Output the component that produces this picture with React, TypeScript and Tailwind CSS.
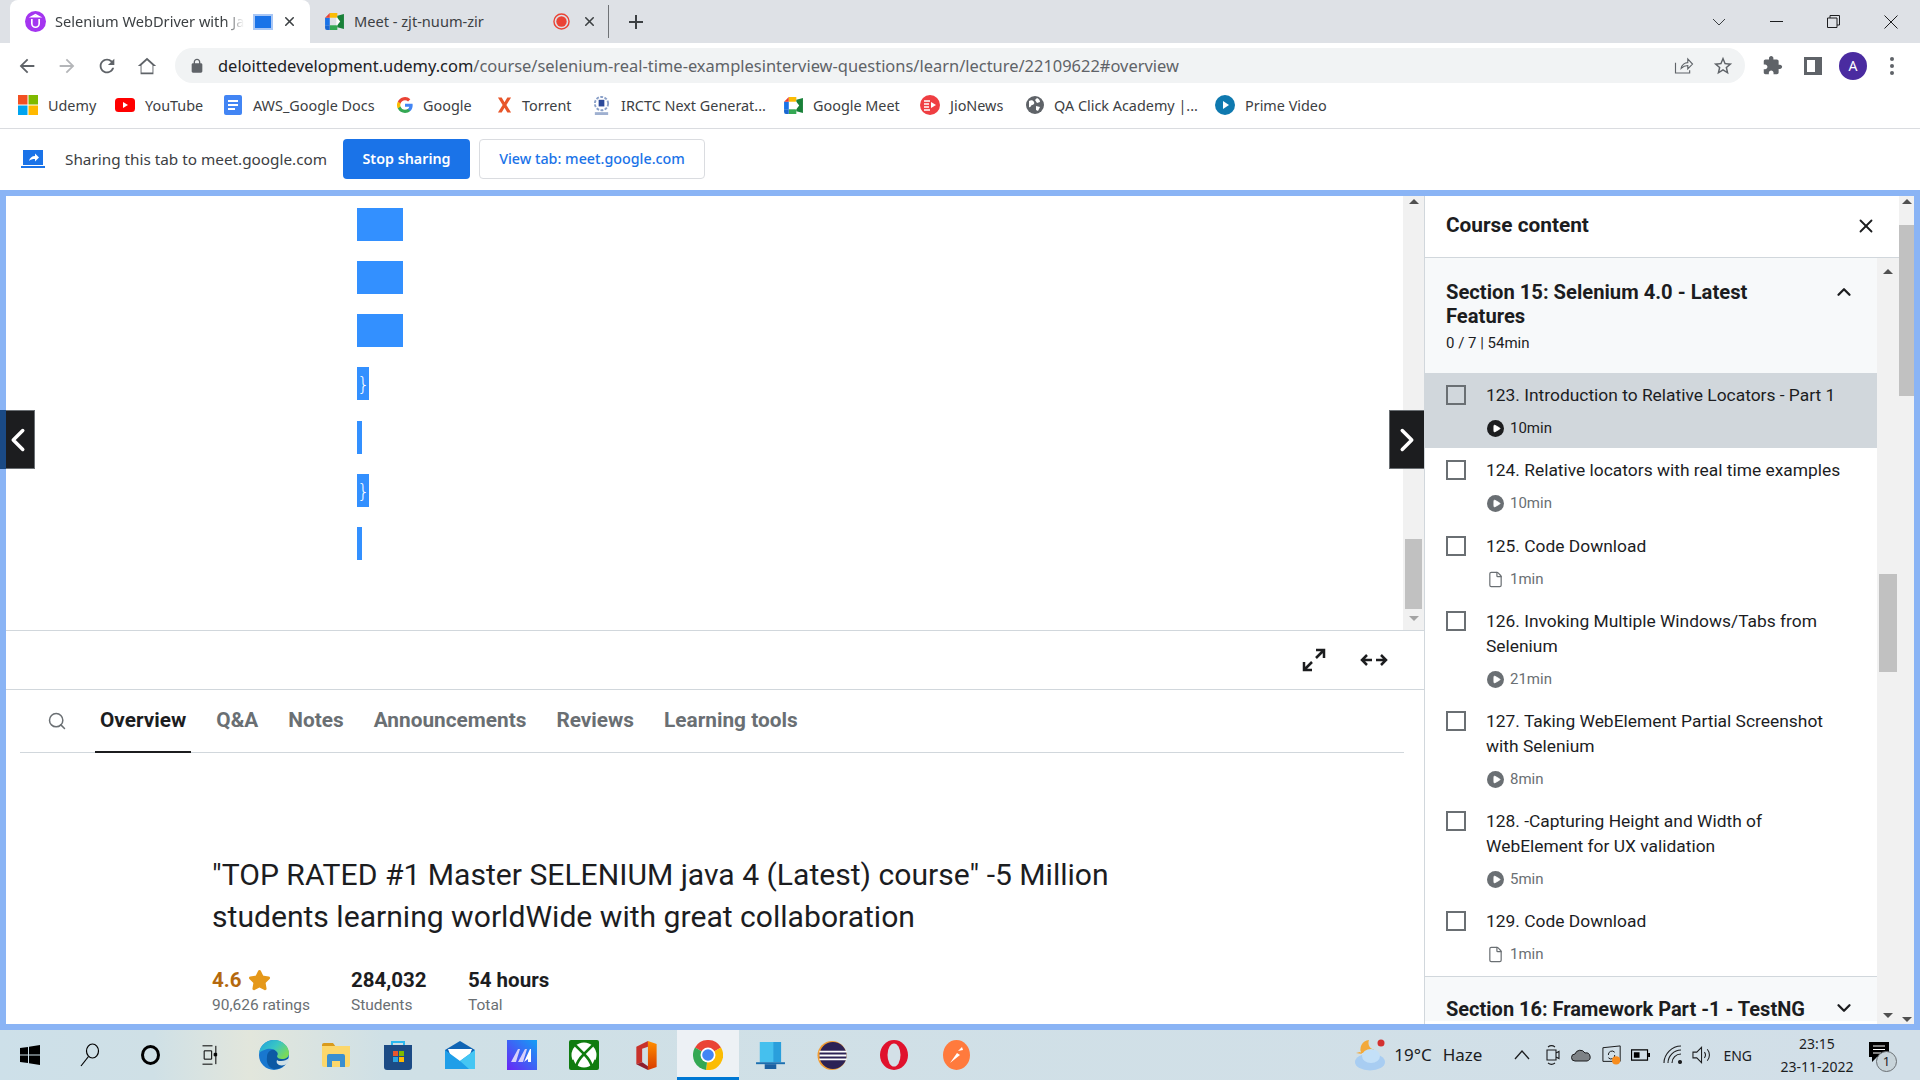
import type { ReactNode } from 'react'
import { Play, File, ChevronUp, ChevronDown, X, ChevronLeft, ChevronRight, Search, Star } from 'lucide-react'

const chromeFont = "font-[family-name:'Noto_Sans',sans-serif]"
const udemyFont = "font-[family-name:Roboto,sans-serif]"

function Mat({ d, className = '' }: { d: string; className?: string }) {
  return (
    <svg viewBox="0 0 24 24" className={className} fill="currentColor">
      <path d={d} />
    </svg>
  )
}

function MeetIcon({ className = '' }: { className?: string }) {
  return (
    <svg viewBox="0 0 20 18" className={className}>
      <path d="M0 5h5v8H0z" fill="#1a73e8" />
      <path d="M5 0h8v5H5z" fill="#fbbc04" />
      <path d="M0 5l5-5v5z" fill="#ea4335" />
      <path d="M5 13h8v5H5z" fill="#34a853" />
      <path d="M0 13h5v5H2a2 2 0 0 1-2-2z" fill="#1967d2" />
      <path d="M13 3v12l7 2V1z" fill="#188038" />
      <path d="M13 5h-1v8h1l3-4z" fill="#fff" />
    </svg>
  )
}

function Tab() {
  return (
    <div className="relative flex h-[43px] w-[300px] items-center rounded-t-[8px] bg-white pl-[15px]">
      <svg viewBox="0 0 20 20" className="h-[21px] w-[21px] shrink-0">
        <circle cx="10" cy="10" r="10" fill="#a435f0" />
        <path d="M6.5 7.5V12a3.5 3.5 0 0 0 7 0V7.5M10 3.5l3.5 2h-7z" fill="none" stroke="#fff" strokeWidth="1.6" />
      </svg>
      <div className="ml-[9px] w-[189px] overflow-hidden whitespace-nowrap text-[14.6px] text-[#3c4043] [mask-image:linear-gradient(90deg,#000_90%,transparent)]">
        Selenium WebDriver with Java
      </div>
      <div className="ml-[9px] h-[16px] w-[20px] shrink-0 border-2 border-[#a9c7f5] bg-[#1a73e8]" />
      <X className="ml-[9px] h-[15px] w-[15px] text-[#3c4043]" strokeWidth={2.5} />
    </div>
  )
}

function TabStrip() {
  return (
    <div className="flex h-[43px] shrink-0 items-center bg-[#dee1e6] pl-[10px]">
      <Tab />
      <div className="flex h-full items-center pl-[15px]">
        <MeetIcon className="h-[17px] w-[19px]" />
        <span className="ml-[10px] w-[199px] text-[14.6px] text-[#3c4043]">Meet - zjt-nuum-zir</span>
        <svg viewBox="0 0 18 18" className="h-[17px] w-[17px]">
          <circle cx="9" cy="9" r="8" fill="none" stroke="#ea4335" strokeWidth="1.5" />
          <circle cx="9" cy="9" r="5.5" fill="#ea4335" />
        </svg>
        <X className="ml-[12px] h-[15px] w-[15px] text-[#3c4043]" strokeWidth={2.5} />
        <div className="ml-[11px] h-[33px] w-px bg-[#6f7276]" />
        <svg viewBox="0 0 16 16" className="ml-[19px] h-[16px] w-[16px] text-[#3c4043]">
          <path d="M8 1v14M1 8h14" stroke="currentColor" strokeWidth="2" />
        </svg>
      </div>
      <div className="ml-auto flex items-center pr-[22px] text-[#3c4043]">
        <svg viewBox="0 0 14 8" className="mr-[44px] h-[8px] w-[14px]" fill="none" stroke="currentColor">
          <path d="M1 1l6 6 6-6" />
        </svg>
        <div className="mr-[44px] h-px w-[13px] bg-[#1c1d1f]" />
        <svg viewBox="0 0 13 13" className="mr-[44px] h-[13px] w-[13px]" fill="none" stroke="#1c1d1f">
          <path d="M.5 3h9.5v9.5H.5zM3 3V.5h9.5V10H10" />
        </svg>
        <svg viewBox="0 0 14 14" className="h-[14px] w-[14px]" fill="none" stroke="#1c1d1f">
          <path d="M.5.5l13 13M13.5.5l-13 13" />
        </svg>
      </div>
    </div>
  )
}

function Toolbar() {
  return (
    <div className="flex h-[40px] shrink-0 items-end bg-white text-[#5f6368]">
      <div className="flex h-[35px] w-[175px] items-center pl-[16px]">
        <Mat d="M20 11H7.83l5.59-5.59L12 4l-8 8 8 8 1.41-1.41L7.83 13H20v-2z" className="h-[22px] w-[22px]" />
        <Mat d="M12 4l-1.41 1.41L16.17 11H4v2h12.17l-5.58 5.59L12 20l8-8z" className="ml-[18px] h-[22px] w-[22px] text-[#b4b6b9]" />
        <Mat d="M17.65 6.35A7.958 7.958 0 0 0 12 4c-4.42 0-7.99 3.58-7.99 8s3.57 8 7.99 8c3.73 0 6.84-2.55 7.73-6h-2.08A5.99 5.99 0 0 1 12 18c-3.31 0-6-2.69-6-6s2.69-6 6-6c1.66 0 3.14.69 4.22 1.78L13 11h7V4l-2.35 2.35z" className="ml-[18px] h-[22px] w-[22px]" />
        <Mat d="M12 5.7l6 5.4V19H6v-7.9l6-5.4M12 3L2 12h3v9h14v-9h3z" className="ml-[18px] h-[22px] w-[22px]" />
      </div>
      <div className="flex h-[35px] w-[1570px] items-center rounded-full bg-[#f1f3f4] pl-[14px]">
        <Mat d="M18 8h-1V6c0-2.76-2.24-5-5-5S7 3.24 7 6v2H6c-1.1 0-2 .9-2 2v10c0 1.1.9 2 2 2h12c1.1 0 2-.9 2-2V10c0-1.1-.9-2-2-2zM9 8V6c0-1.66 1.34-3 3-3s3 1.34 3 3v2H9z" className="h-[16px] w-[16px]" />
        <div className="ml-[13px] whitespace-nowrap text-[16.45px] leading-[24px] text-[#5f6368]">
          <span className="text-[#202124]">deloittedevelopment.udemy.com</span>/course/selenium-real-time-examplesinterview-questions/learn/lecture/22109622#overview
        </div>
        <div className="ml-auto flex items-center pr-[11px]">
          <svg viewBox="0 0 20 18" className="h-[17px] w-[20px]" fill="none" stroke="#5f6368" strokeWidth="1.2">
            <path d="M1 6v11h15v-3M7 12c.5-4 4-6 7-6V2l5 5.5-5 5V9c-3 0-5 1-7 3z" />
          </svg>
          <Mat d="M22 9.24l-7.19-.62L12 2 9.19 8.63 2 9.24l5.46 4.73L5.82 21 12 17.27 18.18 21l-1.63-7.03L22 9.24zM12 15.4l-3.76 2.27 1-4.28-3.32-2.88 4.38-.38L12 6.1l1.71 4.04 4.38.38-3.32 2.88 1 4.28L12 15.4z" className="ml-[18px] h-[22px] w-[22px]" />
        </div>
      </div>
      <div className="flex h-[35px] flex-1 items-center pl-[17px]">
        <Mat d="M20.5 11H19V7c0-1.1-.9-2-2-2h-4V3.5C13 2.12 11.88 1 10.5 1S8 2.12 8 3.5V5H4c-1.1 0-1.99.9-1.99 2v3.8H3.5c1.49 0 2.7 1.21 2.7 2.7s-1.21 2.7-2.7 2.7H2V20c0 1.1.9 2 2 2h3.8v-1.5c0-1.49 1.21-2.7 2.7-2.7 1.49 0 2.7 1.21 2.7 2.7V22H17c1.1 0 2-.9 2-2v-4h1.5c1.38 0 2.5-1.12 2.5-2.5S21.88 11 20.5 11z" className="h-[21px] w-[21px]" />
        <div className="ml-[21px] flex h-[18px] w-[18px] justify-start border-[3px] border-[#5f6368] bg-[#5f6368]">
          <div className="h-full w-[8px] bg-white" />
        </div>
        <div className="ml-[17px] flex h-[28px] w-[28px] items-center justify-center rounded-full bg-[#4a2ba0] text-[14px] text-white">A</div>
        <div className="ml-[23px] flex flex-col gap-[3px]">
          <div className="h-[4px] w-[4px] rounded-full bg-[#5f6368]" />
          <div className="h-[4px] w-[4px] rounded-full bg-[#5f6368]" />
          <div className="h-[4px] w-[4px] rounded-full bg-[#5f6368]" />
        </div>
      </div>
    </div>
  )
}

const bookmarks: { label: string; width: string; icon: ReactNode }[] = [
  {
    label: 'Udemy',
    width: 'w-[97px]',
    icon: (
      <svg viewBox="0 0 20 20" className="h-[20px] w-[20px]">
        <path d="M0 0h9.5v9.5H0z" fill="#f25022" />
        <path d="M10.5 0H20v9.5h-9.5z" fill="#7fba00" />
        <path d="M0 10.5h9.5V20H0z" fill="#00a4ef" />
        <path d="M10.5 10.5H20V20h-9.5z" fill="#ffb900" />
      </svg>
    ),
  },
  {
    label: 'YouTube',
    width: 'w-[108px]',
    icon: (
      <svg viewBox="0 0 20 14" className="h-[14px] w-[20px]">
        <rect width="20" height="14" rx="3.5" fill="#f00" />
        <path d="M8 4l5 3-5 3z" fill="#fff" />
      </svg>
    ),
  },
  {
    label: 'AWS_Google Docs',
    width: 'w-[174px]',
    icon: (
      <svg viewBox="0 0 20 20" className="h-[20px] w-[20px]">
        <rect x="1" width="18" height="20" rx="2" fill="#4285f4" />
        <path d="M5 6h10M5 10h10M5 14h7" stroke="#fff" strokeWidth="1.8" />
      </svg>
    ),
  },
  {
    label: 'Google',
    width: 'w-[100px]',
    icon: (
      <svg viewBox="0 0 24 24" className="h-[16px] w-[16px]">
        <path d="M23.5 12.3c0-.8-.1-1.6-.2-2.3H12v4.5h6.5a5.5 5.5 0 0 1-2.4 3.6v3h3.8c2.3-2.1 3.6-5.2 3.6-8.8z" fill="#4285f4" />
        <path d="M12 24c3.2 0 6-1.1 7.9-2.9l-3.8-3c-1.1.7-2.4 1.2-4.1 1.2-3.1 0-5.8-2.1-6.7-5H1.3v3.1A12 12 0 0 0 12 24z" fill="#34a853" />
        <path d="M5.3 14.3a7.2 7.2 0 0 1 0-4.6V6.6h-4a12 12 0 0 0 0 10.8z" fill="#fbbc05" />
        <path d="M12 4.8c1.8 0 3.3.6 4.6 1.8l3.4-3.4A12 12 0 0 0 1.3 6.6l4 3.1c.9-2.8 3.6-4.9 6.7-4.9z" fill="#ea4335" />
      </svg>
    ),
  },
  {
    label: 'Torrent',
    width: 'w-[95px]',
    icon: (
      <svg viewBox="0 0 16 18" className="h-[18px] w-[15px]">
        <path d="M1 1h4l3 5 3-5h4l-5 8 5 8h-4l-3-5-3 5H1l5-8z" fill="#e8562a" />
      </svg>
    ),
  },
  {
    label: 'IRCTC Next Generat...',
    width: 'w-[192px]',
    icon: (
      <svg viewBox="0 0 20 22" className="h-[21px] w-[19px]">
        <circle cx="10" cy="9" r="7" fill="none" stroke="#8aa0c8" strokeWidth="2" strokeDasharray="3 1.5" />
        <path d="M7 5h6v7H7z" fill="#2c4a9a" />
        <path d="M3 18h14v3H3z" fill="#9fb0d0" />
      </svg>
    ),
  },
  { label: 'Google Meet', width: 'w-[136px]', icon: <MeetIcon className="h-[17px] w-[19px]" /> },
  {
    label: 'JioNews',
    width: 'w-[106px]',
    icon: (
      <svg viewBox="0 0 20 20" className="h-[20px] w-[20px]">
        <circle cx="10" cy="10" r="10" fill="#ef3e42" />
        <path d="M4 6h6M4 9h5M4 12h5M4 15h6" stroke="#fff" strokeWidth="1.5" />
        <path d="M11 7l5 3-5 3z" fill="#fff" />
      </svg>
    ),
  },
  {
    label: 'QA Click Academy |...',
    width: 'w-[189px]',
    icon: (
      <svg viewBox="0 0 18 18" className="h-[18px] w-[18px]">
        <circle cx="9" cy="9" r="9" fill="#5f6368" />
        <path d="M3 5c2-1 4-1 5 1s-1 3-2 3-1 3-3 2zM11 2c2 1 3 2 3 4l-3 1-2-3zM10 10l4 1-2 4-2-1z" fill="#fff" />
      </svg>
    ),
  },
  {
    label: 'Prime Video',
    width: 'w-auto',
    icon: (
      <svg viewBox="0 0 20 20" className="h-[20px] w-[20px]">
        <circle cx="10" cy="10" r="10" fill="#0f79af" />
        <path d="M8 6l6 4-6 4z" fill="#fff" />
      </svg>
    ),
  },
]

function BookmarkBar() {
  return (
    <div className="flex h-[46px] shrink-0 items-center border-b border-[#dadce0] bg-white pl-[18px] text-[14.4px] text-[#3c4043]">
      {bookmarks.map((b) => (
        <div key={b.label} className={`flex items-center whitespace-nowrap ${b.width}`}>
          <span className="mr-[10px] flex items-center">{b.icon}</span>
          {b.label}
        </div>
      ))}
    </div>
  )
}

function ShareBar() {
  return (
    <div className="flex h-[61px] shrink-0 items-center bg-white pb-[1px] pl-[21px]">
      <svg viewBox="0 0 24 18" className="h-[18px] w-[24px]">
        <path d="M2 0h20v15H2z" fill="#1a73e8" />
        <path d="M0 16h24v2H0z" fill="#1a73e8" />
        <path d="M8 11c.5-3 3-5 6-5V3.5L18 7.5l-4 4V9c-2.5 0-4.5.5-6 2z" fill="#fff" />
      </svg>
      <span className="ml-[20px] w-[278px] text-[15.3px] text-[#3c4043]">Sharing this tab to meet.google.com</span>
      <div className="flex h-[40px] w-[127px] items-center justify-center rounded-[4px] bg-[#1a73e8] text-[14.3px] font-semibold text-white">Stop sharing</div>
      <div className="ml-[9px] flex h-[40px] w-[226px] items-center justify-center rounded-[4px] border border-[#dadce0] text-[14.3px] font-medium text-[#1a73e8]">View tab: meet.google.com</div>
    </div>
  )
}

function ScrollUp({ className = '' }: { className?: string }) {
  return <div className={`h-0 w-0 border-x-[5px] border-b-[5px] border-x-transparent border-b-[#505050] ${className}`} />
}

function ScrollDown({ className = '' }: { className?: string }) {
  return <div className={`h-0 w-0 border-x-[5px] border-t-[5px] border-x-transparent border-t-[#a3a3a3] ${className}`} />
}

const selections = [
  { cls: 'w-[46px]', text: '' },
  { cls: 'w-[46px]', text: '' },
  { cls: 'w-[46px]', text: '' },
  { cls: 'w-[12px]', text: '}' },
  { cls: 'w-[5px] mt-px', text: '' },
  { cls: 'w-[12px]', text: '}' },
  { cls: 'w-[5px]', text: '' },
]

function Viewer() {
  return (
    <div className="relative flex h-[435px] shrink-0 border-b border-[#d1d7dc]">
      <div className="flex flex-1 flex-col items-start gap-[20px] pl-[351px] pt-[12px]">
        {selections.map((s, i) => (
          <div key={i} className={`flex h-[33px] items-center overflow-hidden bg-[#3390ff] font-[family-name:'DejaVu_Sans',sans-serif] text-[20px] leading-none font-light text-white ${s.cls}`}>
            {s.text}
          </div>
        ))}
      </div>
      <div className="flex w-[21px] flex-col items-center bg-[#f1f1f1] pt-[3px]">
        <ScrollUp />
        <div className="mt-[335px] h-[70px] w-[17px] bg-[#c1c1c1]" />
        <ScrollDown className="mt-[7px]" />
      </div>
      <div className="absolute left-[-6px] top-[214px] flex h-[59px] w-[35px] items-center justify-center border border-[#6a6f73] bg-[#1c1d1f] text-white">
        <ChevronLeft className="h-[38px] w-[38px] shrink-0" strokeWidth={2.2} />
      </div>
      <div className="absolute right-0 top-[214px] flex h-[59px] w-[35px] items-center justify-center border border-r-0 border-[#6a6f73] bg-[#1c1d1f] text-white">
        <ChevronRight className="h-[38px] w-[38px] shrink-0" strokeWidth={2.2} />
      </div>
    </div>
  )
}

function Controls() {
  return (
    <div className="flex h-[59px] shrink-0 items-center justify-end border-b border-[#d1d7dc] pr-[36px] text-[#1c1d1f]">
      <svg viewBox="0 0 24 24" className="h-[24px] w-[24px]" fill="none" stroke="currentColor" strokeWidth="2.5">
        <path d="M14 2h8v8M22 2l-8 8M2 14v8h8M2 22l8-8" />
      </svg>
      <svg viewBox="0 0 28 14" className="ml-[34px] h-[14px] w-[28px]" fill="none" stroke="currentColor" strokeWidth="2.5">
        <path d="M7 2L2 7l5 5M2 7h10M21 2l5 5-5 5M26 7H16" />
      </svg>
    </div>
  )
}

const tabs = ['Q&A', 'Notes', 'Announcements', 'Reviews', 'Learning tools']

function TabsRow() {
  return (
    <div className="relative ml-[14px] mr-[20px] flex h-[63px] shrink-0 items-stretch gap-[20px] border-b border-[#d1d7dc] pl-[75px] text-[20.8px] font-bold">
      <Search className="absolute left-[27px] top-[21px] h-[20px] w-[20px] text-[#6a6f73]" strokeWidth={1.8} />
      <div className="relative flex items-center px-[5px] text-[#1c1d1f]">
        Overview
        <div className="absolute inset-x-0 bottom-[-1px] h-[2px] bg-[#1c1d1f]" />
      </div>
      {tabs.map((t) => (
        <div key={t} className="flex items-center px-[5px] text-[#6a6f73]">{t}</div>
      ))}
    </div>
  )
}

function Stat({ value, label }: { value: string; label: string }) {
  return (
    <div className="flex flex-col">
      <span className="text-[20.5px] font-bold leading-[24px] text-[#1c1d1f]">{value}</span>
      <span className="mt-[2px] text-[15.5px] leading-[22px] text-[#6a6f73]">{label}</span>
    </div>
  )
}

function MainColumn() {
  return (
    <div className={`flex w-[1418px] shrink-0 flex-col ${udemyFont}`}>
      <Viewer />
      <Controls />
      <TabsRow />
      <div className="pl-[206px] pt-[101px]">
        <div className="w-[1000px] text-[30.1px] leading-[42px] text-[#1c1d1f]">
          "TOP RATED #1 Master SELENIUM java 4 (Latest) course" -5 Million
          <br />
          students learning worldWide with great collaboration
        </div>
        <div className="mt-[30px] flex">
          <div className="flex w-[139px] flex-col">
            <div className="flex items-center">
              <span className="text-[20.5px] font-bold leading-[24px] text-[#b4690e]">4.6</span>
              <Star className="ml-[7px] h-[23px] w-[23px] fill-[#e59819] text-[#e59819]" />
            </div>
            <span className="mt-[2px] text-[15.5px] leading-[22px] text-[#6a6f73]">90,626 ratings</span>
          </div>
          <div className="w-[117px]">
            <Stat value="284,032" label="Students" />
          </div>
          <Stat value="54 hours" label="Total" />
        </div>
      </div>
    </div>
  )
}

type Lecture = { title: ReactNode; meta: string; kind: 'video' | 'file'; active?: boolean; pad?: string }

const lectures: Lecture[] = [
  { title: '123. Introduction to Relative Locators - Part 1', meta: '10min', kind: 'video', active: true },
  { title: '124. Relative locators with real time examples', meta: '10min', kind: 'video', pad: 'pb-[11px]' },
  { title: '125. Code Download', meta: '1min', kind: 'file' },
  { title: <>126. Invoking Multiple Windows/Tabs from<br />Selenium</>, meta: '21min', kind: 'video' },
  { title: <>127. Taking WebElement Partial Screenshot<br />with Selenium</>, meta: '8min', kind: 'video' },
  { title: <>128. -Capturing Height and Width of<br />WebElement for UX validation</>, meta: '5min', kind: 'video' },
  { title: '129. Code Download', meta: '1min', kind: 'file' },
]

function LectureRow({ item }: { item: Lecture }) {
  const tone = item.active ? 'text-[#1c1d1f]' : 'text-[#6a6f73]'
  return (
    <div className={`flex pl-[21px] pt-[10px] ${item.pad ?? 'pb-[10px]'} ${item.active ? 'bg-[#d1d7dc]' : ''}`}>
      <div className="mt-[2px] h-[20px] w-[20px] shrink-0 border-2 border-[#6a6f73]" />
      <div className="ml-[20px]">
        <div className="text-[17.4px] leading-[25px] text-[#1c1d1f]">{item.title}</div>
        <div className={`mt-[10px] flex h-[20px] items-center text-[15px] ${tone}`}>
          {item.kind === 'video' ? (
            <span className="ml-[1px] flex h-[17px] w-[17px] items-center justify-center rounded-full bg-current">
              <Play className="ml-px h-[9px] w-[9px] fill-white text-white" />
            </span>
          ) : (
            <File className="ml-[1px] h-[17px] w-[17px]" strokeWidth={1.7} />
          )}
          <span className="ml-[6px]">{item.meta}</span>
        </div>
      </div>
    </div>
  )
}

function Sidebar() {
  return (
    <div className={`flex w-[475px] shrink-0 flex-col border-l border-[#d1d7dc] ${udemyFont}`}>
      <div className="flex h-[62px] shrink-0 items-center justify-between border-b border-[#d1d7dc] pb-[2px] pl-[21px] pr-[22px]">
        <span className="text-[20.8px] font-bold text-[#1c1d1f]">Course content</span>
        <X className="h-[22px] w-[22px] text-[#1c1d1f]" strokeWidth={2} />
      </div>
      <div className="flex min-h-0 flex-1">
        <div className="w-[452px] shrink-0 overflow-hidden">
          <div className="flex items-start bg-[#f7f9fa] pb-[20px] pl-[21px] pt-[22px]">
            <div className="w-[320px]">
              <div className="text-[20.2px] font-bold leading-[24px] text-[#1c1d1f]">Section 15: Selenium 4.0 - Latest Features</div>
              <div className="mt-[5px] text-[15px] leading-[20px] text-[#1c1d1f]">0 / 7 | 54min</div>
            </div>
            <ChevronUp className="ml-[67px] mt-[1px] h-[22px] w-[22px] text-[#1c1d1f]" strokeWidth={2.5} />
          </div>
          {lectures.map((l, i) => (
            <LectureRow key={i} item={l} />
          ))}
          <div className="mt-[2px] flex items-start border-t border-[#d1d7dc] bg-[#f7f9fa] pl-[21px] pt-[20px]">
            <div className="w-[387px] text-[20px] font-bold leading-[24px] text-[#1c1d1f]">Section 16: Framework Part -1 - TestNG</div>
            <ChevronDown className="h-[22px] w-[22px] text-[#1c1d1f]" strokeWidth={2.5} />
          </div>
        </div>
        <div className="flex w-[22px] flex-col items-center bg-[#f1f1f1] pt-[11px]">
          <ScrollUp />
          <div className="mt-[300px] h-[98px] w-[18px] bg-[#c1c1c1]" />
          <ScrollUp className="mt-auto mb-[6px] rotate-180" />
        </div>
      </div>
    </div>
  )
}

function OuterScrollbar() {
  return (
    <div className="flex w-[15px] shrink-0 flex-col items-center bg-[#f1f1f1] pt-[3px]">
      <ScrollUp />
      <div className="mt-[21px] h-[171px] w-[15px] bg-[#c1c1c1]" />
      <ScrollUp className="mt-auto mb-[2px] rotate-180" />
    </div>
  )
}

function Page() {
  return (
    <div className="relative flex min-h-0 flex-1 bg-[#8ab4f5] p-[6px]">
      <div className="flex min-h-0 flex-1 overflow-hidden bg-white">
        <MainColumn />
        <Sidebar />
        <OuterScrollbar />
      </div>
      {/* prev button sits over the share border, tinted by it */}
      <div className="absolute left-0 top-[220px] h-[59px] w-[6px] bg-[#1a4a85]" />
    </div>
  )
}

const taskIcons: ReactNode[] = [
  <svg key="edge" viewBox="0 0 30 30" className="h-[30px] w-[30px]">
    <defs>
      <linearGradient id="edgeG" x1="0" y1="0" x2="1" y2="0.6">
        <stop offset="0" stopColor="#1f9fe0" />
        <stop offset="0.55" stopColor="#39c6c4" />
        <stop offset="1" stopColor="#7ad95a" />
      </linearGradient>
    </defs>
    <circle cx="15" cy="15" r="15" fill="#1877cf" />
    <path d="M8 17c0-5 4-8 8-7 3 1 4 3 3 6 3 3 8 3 10 1 1 5-5 12-13 12-6 0-9-6-8-12z" fill="#0c59a4" />
    <path d="M0 13C1 5 8 0 15 0c8 0 15 6 15 13 0 4-3 6-7 6-3 0-5-1-5-3 1-1 1-3 0-4-2-3-6-4-10-3-4 1-7 3-8 4z" fill="url(#edgeG)" />
    <path d="M18 20c-1 2 0 4 2 5 3 1 7 0 9-2 0-2 1-3 1-5-2 2-5 3-8 3-2 0-3 0-4-1z" fill="#d0e0e6" />
  </svg>,
  <svg key="files" viewBox="0 0 28 24" className="h-[24px] w-[28px]">
    <path d="M0 2a2 2 0 0 1 2-2h9l3 4H0z" fill="#d99a1c" />
    <path d="M0 3h28v19a2 2 0 0 1-2 2H2a2 2 0 0 1-2-2z" fill="#fcd76b" />
    <path d="M5 24V13a2 2 0 0 1 2-2h14a2 2 0 0 1 2 2v11h-5v-6h-8v6z" fill="#3a8fd0" />
  </svg>,
  <svg key="store" viewBox="0 0 28 30" className="h-[30px] w-[28px]">
    <path d="M8 7V2h12v5" fill="none" stroke="#2bb8f0" strokeWidth="2" />
    <path d="M0 5h28v22a3 3 0 0 1-3 3H3a3 3 0 0 1-3-3z" fill="#1c4b85" />
    <path d="M9 11h5v5H9z" fill="#e8552e" />
    <path d="M15 11h5v5h-5z" fill="#7fba00" />
    <path d="M9 17h5v5H9z" fill="#2ba3e0" />
    <path d="M15 17h5v5h-5z" fill="#ffb900" />
  </svg>,
  <svg key="mail" viewBox="0 0 30 28" className="h-[28px] w-[30px]">
    <path d="M15 0l15 9v19H0V9z" fill="#0f64b4" />
    <path d="M3 8h24l-3 8-9 6-9-6z" fill="#fff" />
    <path d="M0 9l15 11L30 9v19H0z" fill="#1f9ee8" />
    <path d="M15 20L30 9v19H24z" fill="#45c6f3" />
  </svg>,
  <svg key="ma" viewBox="0 0 30 30" className="h-[30px] w-[30px]">
    <defs>
      <linearGradient id="maG" x1="0" y1="1" x2="1" y2="0">
        <stop offset="0" stopColor="#6a25f5" />
        <stop offset="1" stopColor="#12a0f5" />
      </linearGradient>
    </defs>
    <path d="M0 0h30v30H0z" fill="url(#maG)" />
    <path d="M4 22L11 9h2l-4 13zM11 22l7-13h2l-4 13z" fill="#d8d0fa" />
    <path d="M17 22L23 9h1v13h-3v-3z" fill="#fff" />
  </svg>,
  <svg key="xbox" viewBox="0 0 30 30" className="h-[30px] w-[30px]">
    <rect width="30" height="30" rx="2" fill="#107c10" />
    <circle cx="15" cy="15" r="12.5" fill="#fff" />
    <path d="M5 4l10 10L25 4M15 14c-3 3-7 7-8 13M15 14c3 3 7 7 8 13" fill="none" stroke="#107c10" strokeWidth="2.5" />
    <path d="M3 20c1 3 2 5 4 7M27 20c-1 3-2 5-4 7" stroke="#107c10" strokeWidth="3" fill="none" />
  </svg>,
  <svg key="office" viewBox="0 0 22 30" className="h-[29px] w-[22px]">
    <defs>
      <linearGradient id="offG" x1="0" y1="0" x2="0" y2="1">
        <stop offset="0" stopColor="#ff8f00" />
        <stop offset="1" stopColor="#d83b01" />
      </linearGradient>
    </defs>
    <path d="M13 0l9 3v24l-9 3z" fill="url(#offG)" />
    <path d="M13 0L1 6v18l6-2V8l6-2z" fill="#c8322b" />
    <path d="M1 24l12 6v-4l-6-4z" fill="#8f1d2c" />
  </svg>,
  <svg key="chrome" viewBox="0 0 30 30" className="h-[30px] w-[30px]">
    <path d="M15 15L2 7.5A15 15 0 0 1 28 7.5z" fill="#ea4335" />
    <path d="M15 15L28 7.5A15 15 0 0 1 13 29.9z" fill="#fbbc04" />
    <path d="M15 15L13 29.9A15 15 0 0 1 2 7.5z" fill="#34a853" />
    <circle cx="15" cy="15" r="7.5" fill="#fff" />
    <circle cx="15" cy="15" r="5.8" fill="#4285f4" />
  </svg>,
  <svg key="app" viewBox="0 0 30 28" className="h-[27px] w-[29px]">
    <path d="M4 0h22v21H4z" fill="#2a9fdc" />
    <path d="M4 0h14v21H4z" fill="#45c0ee" />
    <path d="M0 21h30v2H0z" fill="#1a6fb0" />
    <path d="M9 23h12v5H9z" fill="#1a5fa0" />
  </svg>,
  <svg key="eclipse" viewBox="0 0 30 30" className="h-[29px] w-[30px]">
    <circle cx="15" cy="15" r="15" fill="#f29b30" />
    <circle cx="16" cy="15" r="14" fill="#2c2255" />
    <path d="M2 11h28M2 15h28M2 19h28" stroke="#fff" strokeWidth="2" />
  </svg>,
  <svg key="opera" viewBox="0 0 28 30" className="h-[30px] w-[28px]">
    <ellipse cx="14" cy="15" rx="14" ry="15" fill="#e0122d" />
    <ellipse cx="14" cy="15" rx="6.5" ry="11.5" fill="#d3e0e7" />
  </svg>,
  <svg key="postman" viewBox="0 0 27 30" className="h-[30px] w-[27px]">
    <ellipse cx="13.5" cy="15" rx="13.5" ry="15" fill="#ff7a3d" />
    <path d="M7 23l7-10 3 2zM15 11l4-4 1 3z" fill="#fff" />
  </svg>,
]

function Taskbar() {
  return (
    <div className={`flex h-[50px] shrink-0 items-stretch bg-[linear-gradient(90deg,#cde0e9_0%,#cfe0e6_8%,#e2e6dc_13%,#cfe0e6_20%,#d2dfe8_100%)] text-[#1c1d1f] ${chromeFont}`}>
      <div className="flex w-[60px] items-center justify-center">
        <svg viewBox="0 0 20 20" className="h-[20px] w-[20px]" fill="#000">
          <path d="M0 3l8-1.1v7.6H0zM9 1.7L20 0v9.5H9zM0 10.5h8v7.6L0 17zM9 10.5h11V20L9 18.3z" />
        </svg>
      </div>
      <div className="flex w-[60px] items-center justify-center">
        <svg viewBox="0 0 20 24" className="h-[24px] w-[20px]" fill="none" stroke="#000" strokeWidth="1.2">
          <ellipse cx="12.5" cy="8" rx="6" ry="7" />
          <path d="M8.5 13.5L1 23" />
        </svg>
      </div>
      <div className="flex w-[60px] items-center justify-center">
        <div className="h-[20px] w-[19px] rounded-[50%] border-[3px] border-black" />
      </div>
      <div className="flex w-[60px] items-center justify-center">
        <svg viewBox="0 0 20 24" className="h-[20px] w-[20px]" fill="none" stroke="#000" strokeWidth="1.2">
          <path d="M1 1h12M1 23h12M3 7h9v10H3zM17 1v22" />
          <path d="M15 10h3v3h-3z" fill="#000" />
        </svg>
      </div>
      <div className="flex pl-[3px]">
        {taskIcons.map((icon, i) => (
          <div key={i} className={`flex w-[62px] items-center justify-center ${i === 7 ? 'border-b-[3px] border-[#0078d4] bg-[#edf1f5] pt-[3px]' : ''}`}>
            {icon}
          </div>
        ))}
      </div>
      <div className="ml-auto flex items-center">
        <svg viewBox="0 0 32 32" className="h-[32px] w-[32px]">
          <path d="M15 1a9 9 0 0 0-7 14l-6-1 4-1c5 3 13 1 14-3-3 1-7-4-5-9z" fill="#f2a93b" />
          <ellipse cx="16" cy="23" rx="15" ry="8.5" fill="#a8cdf2" />
          <ellipse cx="17" cy="17" rx="9" ry="7" fill="#c3e0f8" />
          <circle cx="27" cy="4" r="3.5" fill="#d3302f" />
        </svg>
        <span className="ml-[8px] text-[17px]">19°C</span>
        <span className="ml-[11px] text-[17px]">Haze</span>
        <svg viewBox="0 0 16 10" className="ml-[32px] h-[10px] w-[16px]" fill="none" stroke="#1c1d1f" strokeWidth="1.3">
          <path d="M1 9l7-8 7 8" />
        </svg>
        <svg viewBox="0 0 14 20" className="ml-[16px] h-[20px] w-[14px]" fill="none" stroke="#1c1d1f" strokeWidth="1.1">
          <path d="M1 5h9v10H1zM10 8l3-1.5v7L10 12M2 2c2-1.5 5-1.5 7 0M2 18c2 1.5 5 1.5 7 0" />
        </svg>
        <svg viewBox="0 0 20 14" className="ml-[11px] h-[14px] w-[20px]">
          <path d="M4 13a3.5 3.5 0 0 1 0-7 5.5 5.5 0 0 1 10-1 4 4 0 0 1 2 8z" fill="#7d8286" stroke="#1c1d1f" />
        </svg>
        <svg viewBox="0 0 22 22" className="ml-[11px] h-[22px] w-[20px]" fill="none" stroke="#1c1d1f" strokeWidth="1.1">
          <path d="M1 3l19-2v17H1z" />
          <path d="M7 11a4 4 0 0 1 7-3M14 11a4 4 0 0 1-7 3" />
          <circle cx="15.5" cy="17" r="4.5" fill="#f78c1e" stroke="none" />
        </svg>
        <svg viewBox="0 0 20 12" className="ml-[9px] h-[12px] w-[19px]">
          <path d="M.6.6h16.8v10.800H.6z" fill="none" stroke="#000" strokeWidth="1.2" />
          <path d="M3 3h6v6H3zM18 4h2v4h-2z" fill="#000" />
        </svg>
        <svg viewBox="0 0 20 20" className="ml-[13px] h-[20px] w-[20px]" fill="none" stroke="#1c1d1f" strokeWidth="1.1">
          <path d="M1 18C1 9 9 1 18 1M5 18c0-7 6-13 13-13M9 18c0-5 4-9 9-9" />
          <circle cx="17" cy="17" r="1.5" fill="#1c1d1f" />
        </svg>
        <svg viewBox="0 0 22 20" className="ml-[9px] h-[20px] w-[21px]" fill="none" stroke="#1c1d1f" strokeWidth="1.1">
          <path d="M1 7h4l5-5v16l-5-5H1zM13 7c1.5 2 1.5 4 0 6M16 4c3 3.5 3 8.5 0 12" />
        </svg>
        <span className="ml-[10px] text-[14px]">ENG</span>
        <div className="ml-[27px] flex w-[76px] flex-col items-center text-[14px] leading-[23px]">
          <span>23:15</span>
          <span>23-11-2022</span>
        </div>
        <div className="relative ml-[14px] mr-[25px] h-[30px] w-[26px]">
          <svg viewBox="0 0 20 20" className="h-[24px] w-[20px]">
            <path d="M0 0h20v15H8l-5 5v-5H0z" fill="#000" />
            <path d="M4 4h12M4 7.5h12M4 11h8" stroke="#fff" />
          </svg>
          <div className="absolute bottom-[-2px] right-[-2px] flex h-[21px] w-[21px] items-center justify-center rounded-full border border-[#6a6f73] bg-[#c8d4da] text-[13px]">1</div>
        </div>
      </div>
    </div>
  )
}

export default function App() {
  return (
    <div className="flex h-[1080px] w-[1920px] flex-col overflow-hidden bg-white">
      <div className={`flex shrink-0 flex-col ${chromeFont}`}>
        <TabStrip />
        <Toolbar />
        <BookmarkBar />
        <ShareBar />
      </div>
      <Page />
      <Taskbar />
    </div>
  )
}
